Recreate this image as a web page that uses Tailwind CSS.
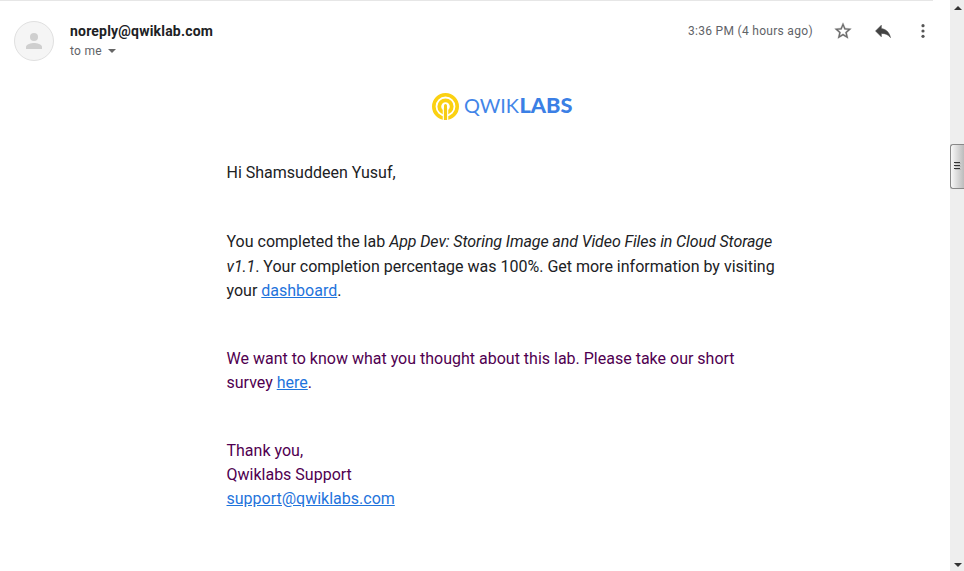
<!DOCTYPE html>
<html lang="en">
<head>
<meta charset="utf-8">
<title>Qwiklabs mail</title>
<script src="https://cdn.jsdelivr.net/npm/@tailwindcss/browser@4"></script>
</head>
<body class="bg-white font-['Roboto',sans-serif]">
<div class="flex h-[571px] w-[964px] overflow-hidden">
  <main class="w-[950px] shrink-0">
    <div class="h-px w-[933px] bg-[#e6e6e6]"></div>
    <header class="flex h-[70px] pl-[14px] pt-5">
      <div class="flex size-10 shrink-0 items-center justify-center rounded-full border border-[#e0e0e0] bg-[#f5f5f5]">
        <svg class="size-6" viewBox="0 0 24 24" fill="#cfcfcf"><circle cx="12" cy="8" r="4"/><path d="M4 20v-2c0-2.7 5.300-4 8-4s8 1.300 8 4v2z"/></svg>
      </div>
      <div class="ml-4 w-[618px]">
        <div class="h-5 whitespace-nowrap text-sm leading-5 font-bold tracking-[0.2px] text-[#202124]">noreply@qwiklab.com</div>
        <div class="flex h-5 items-center text-xs tracking-[0.3px] text-[#5f6368]">to me
          <svg class="ml-[6px] h-1 w-2" viewBox="0 0 8 4" fill="#666"><path d="M0 0h8L4 4z"/></svg>
        </div>
      </div>
      <div class="h-5 w-[145px] whitespace-nowrap text-xs leading-5 tracking-[0.3px] text-[#5f6368]">3:36 PM (4 hours ago)</div>
      <div class="flex h-5 items-center gap-5">
        <svg class="size-5" viewBox="0 0 24 24" fill="#6c6c6c" stroke="#6c6c6c" stroke-width=".3"><path d="M22 9.240l-7.190-.62L12 2 9.190 8.630 2 9.240l5.460 4.730L5.820 21 12 17.270 18.180 21l-1.630-7.030L22 9.240zM12 15.400l-3.760 2.270 1-4.280-3.320-2.880 4.380-.38L12 6.100l1.710 4.040 4.380.38-3.320 2.880 1 4.280L12 15.400z"/></svg>
        <svg class="size-5" viewBox="0 0 24 24" fill="#444"><path d="M10 9V5l-7 7 7 7v-4.100c5 0 8.500 1.600 11 5.100-1-5-4-10-11-11z" stroke="#444" stroke-width=".6"/></svg>
        <svg class="size-5" viewBox="0 0 20 20" fill="#555"><circle cx="10" cy="4.700" r="1.600"/><circle cx="10" cy="10" r="1.600"/><circle cx="10" cy="15.300" r="1.600"/></svg>
      </div>
    </header>
    <div class="ml-[431px] mt-[21px] h-7 w-[143px]">
      <svg class="block h-7 w-[143px]" viewBox="0 0 143 28">
        <circle cx="14.500" cy="14.500" r="11.700" fill="none" stroke="#fbd112" stroke-width="3.600"/>
        <circle cx="14.500" cy="14.500" r="6.200" fill="none" stroke="#fbd112" stroke-width="3.800"/>
        <path d="M11.700 16v12.500h5.600V16z" fill="#fffbe8"/>
        <path d="M13 13.500a1.500 1.500 0 0 1 3 0V28h-3z" fill="#f6cb15"/>
        <text x="33" y="21" font-family="Lato" font-size="20" textLength="55" lengthAdjust="spacingAndGlyphs" fill="#4285e8">QWIK</text>
        <text x="88.500" y="21" font-family="Lato" font-weight="900" font-size="20" textLength="53" lengthAdjust="spacingAndGlyphs" fill="#3b7fe5">LABS</text>
      </svg>
    </div>
    <article class="ml-[226.500px] mt-[41px] w-[560px] whitespace-nowrap text-base leading-6 text-[#202124]">
      <p>Hi Shamsuddeen Yusuf,</p>
      <p class="mt-[45px] leading-[24.5px]">You completed the lab <i class="tracking-[-0.1px]">App Dev: Storing Image and Video Files in Cloud Storage</i><br><i class="tracking-[-0.1px]">v1.1</i>. Your completion percentage was 100%. Get more information by visiting<br>your <a class="text-[#1f74dc] underline">dashboard</a>.</p>
      <p class="mt-[43.5px] text-[#500050]">We want to know what you thought about this lab. Please take our short<br>survey <a class="text-[#1f74dc] underline">here</a>.</p>
      <p class="mt-11 text-[#500050]">Thank you,<br>Qwiklabs Support<br><a class="text-[#1f74dc] underline">support@qwiklabs.com</a></p>
    </article>
  </main>
  <aside class="flex w-[14px] flex-col items-end bg-[#eeeeee]">
    <svg class="mr-[2px] mt-[6px] h-1 w-2 shrink-0" viewBox="0 0 8 4" fill="#333"><path d="M0 4h8L4 0z"/></svg>
    <div class="mt-[134px] flex h-[45px] w-[14px] shrink-0 items-center justify-center rounded-l-[3px] border border-r-0 border-[#888] bg-linear-to-r from-[#f8f8f8] to-[#bcbcbc]">
      <svg class="mb-[2px] h-[9px] w-[7px]" viewBox="0 0 7 9"><path d="M0 1.500h6M0 4.500h6M0 7.500h6" stroke="#333"/><path d="M1 2.500h6M1 5.500h6M1 8.500h6" stroke="#aaa" stroke-width=".6"/></svg>
    </div>
    <svg class="mb-[4px] mr-[2px] mt-auto h-1 w-2 shrink-0" viewBox="0 0 8 4" fill="#333"><path d="M0 0h8L4 4z"/></svg>
  </aside>
</div>
</body>
</html>
